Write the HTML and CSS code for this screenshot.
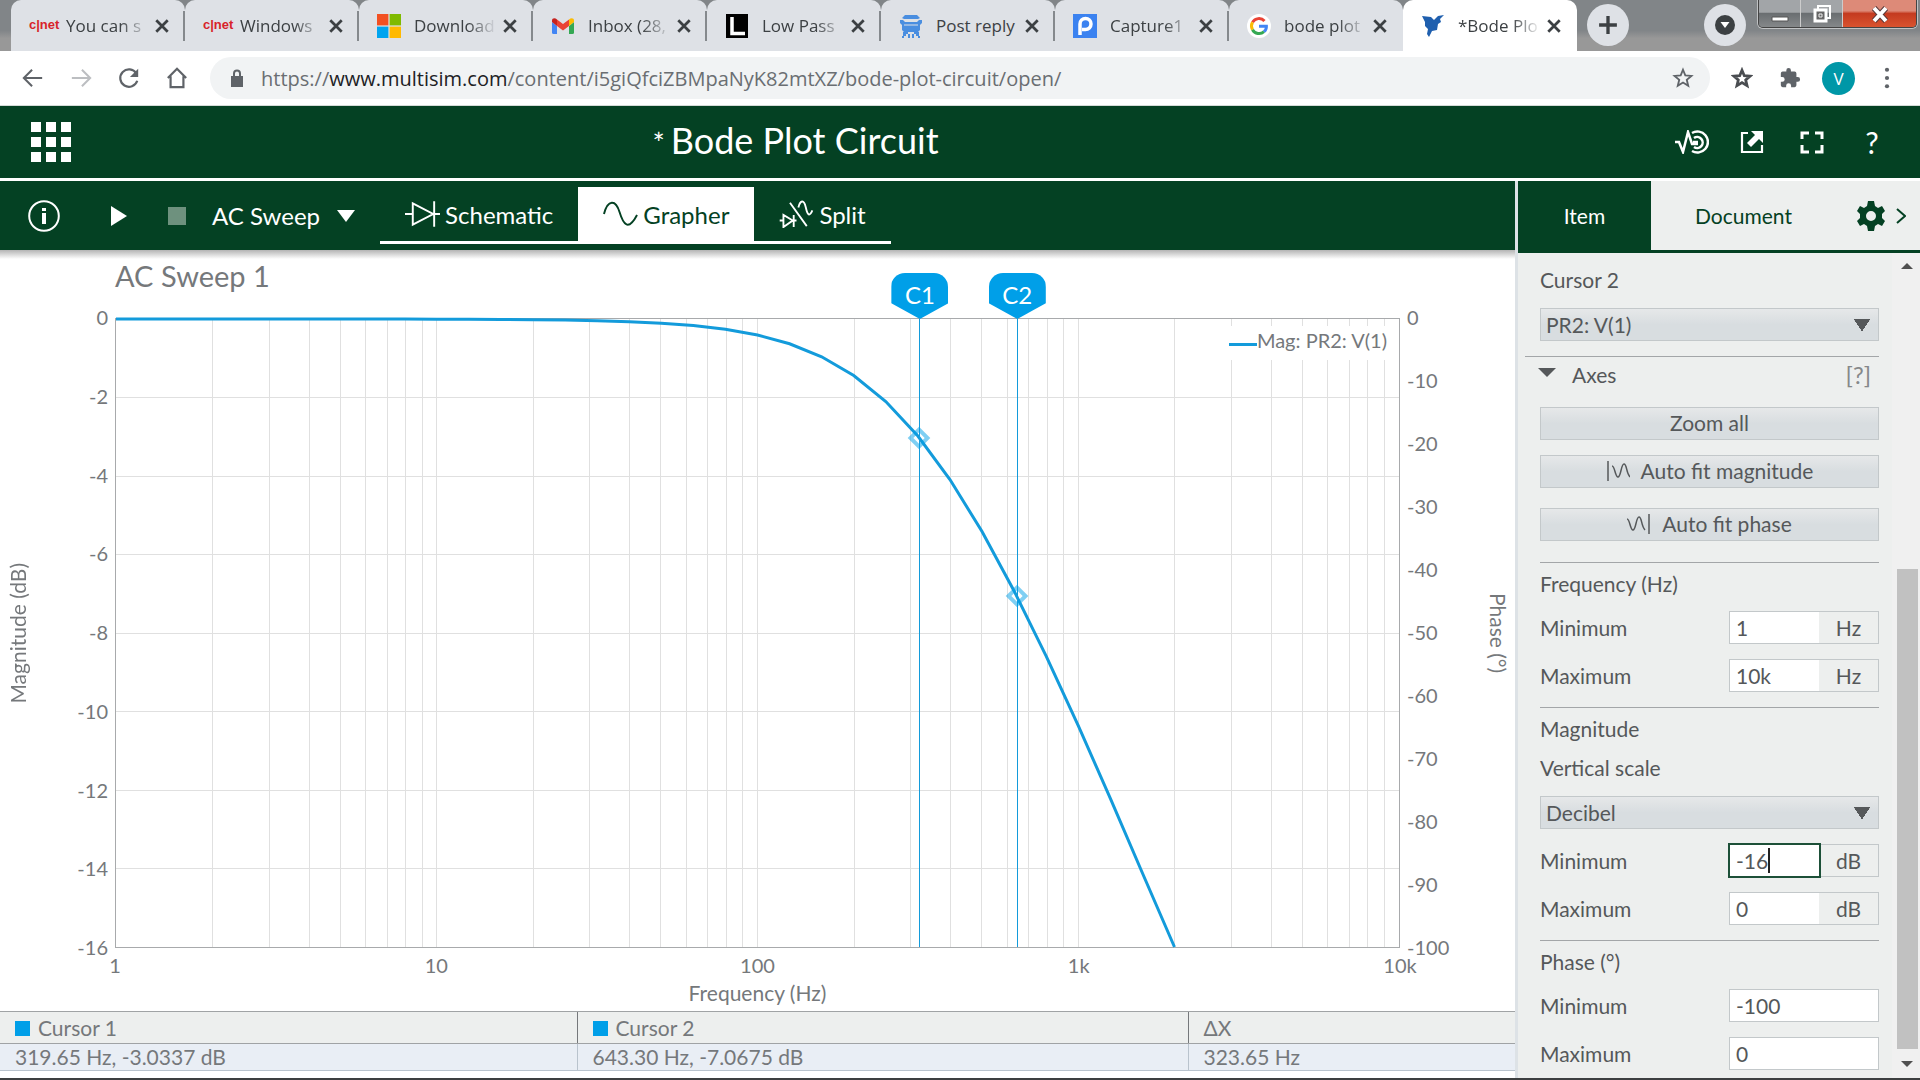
FILE: index.html
```html
<!DOCTYPE html>
<html lang="en">
<head>
  <meta charset="UTF-8">
  <meta name="viewport" content="width=device-width, initial-scale=1.0">
  <title>*Bode Plot Circuit</title>
  <link rel="stylesheet" href="styles.css">
</head>
<body>
  <!-- shared icon shapes -->
  <svg class="defs" width="0" height="0" aria-hidden="true">
    <symbol id="i-close" viewBox="0 0 14 14"><path d="M2 2l10 10M12 2L2 12" fill="none" stroke="#3c4043" stroke-width="2.4"/></symbol>
    <symbol id="i-star" viewBox="0 0 24 24"><path d="M12 3l2.500 6.200 6.700.5-5.100 4.300 1.600 6.500-5.700-3.500-5.700 3.500 1.600-6.500L2.800 9.700l6.700-.5z" fill="none" stroke="#5f6368" stroke-width="2"/></symbol>
  </svg>

  <div class="tabstrip">
    <div class="tab">
      <span class="cnet">c|net</span>
      <span class="tab-title">You can s</span>
      <button class="close" aria-label="Close tab"><svg><use href="#i-close"/></svg></button>
    </div>
    <div class="tab">
      <span class="cnet">c|net</span>
      <span class="tab-title">Windows</span>
      <button class="close" aria-label="Close tab"><svg><use href="#i-close"/></svg></button>
    </div>
    <div class="tab">
      <svg class="favicon" viewBox="0 0 24 24"><path fill="#f25022" d="M0 0h11.400v11.400H0z"/><path fill="#7fba00" d="M12.600 0H24v11.400H12.600z"/><path fill="#00a4ef" d="M0 12.600h11.400V24H0z"/><path fill="#ffb900" d="M12.600 12.600H24V24H12.600z"/></svg>
      <span class="tab-title">Download</span>
      <button class="close" aria-label="Close tab"><svg><use href="#i-close"/></svg></button>
    </div>
    <div class="tab">
      <svg class="favicon" viewBox="0 0 24 24"><path fill="#4285f4" d="M1 8l5 4v8H2.500A1.500 1.500 0 0 1 1 18.500z"/><path fill="#34a853" d="M23 8l-5 4v8h3.500a1.500 1.500 0 0 0 1.500-1.500z"/><path fill="#ea4335" d="M6 5.500l6 4.500 6-4.500V12l-6 4.500L6 12z"/><path fill="#c5221f" d="M1 8V6.500C1 4 4 3.600 6 5.500V12z"/><path fill="#fbbc04" d="M23 8V6.500C23 4 20 3.600 18 5.500V12z"/></svg>
      <span class="tab-title">Inbox (28,</span>
      <button class="close" aria-label="Close tab"><svg><use href="#i-close"/></svg></button>
    </div>
    <div class="tab">
      <svg class="favicon" viewBox="0 0 24 24"><path fill="#000" d="M1 0h22v24H1z"/><path fill="none" stroke="#fff" stroke-width="3.500" d="M7 3v16.500h13"/></svg>
      <span class="tab-title">Low Pass</span>
      <button class="close" aria-label="Close tab"><svg><use href="#i-close"/></svg></button>
    </div>
    <div class="tab">
      <svg class="favicon" viewBox="0 0 24 24" fill="#4a8ee0"><path d="M6 1h12l3 3-2 1H5L3 4zM1 6h3l2 2h12l2-2h3v3l-2 2v5l-2 2H5l-2-2v-5L1 9z"/><path d="M4 18h5v2H7v2H5v2H3v-2h1zM15 18h5v4h1v2h-2v-2h-2v-2h-2zM9 20h2v4H9zM13 20h2v4h-2z"/><path d="M5 11h14" stroke="#dee1e6"/></svg>
      <span class="tab-title full">Post reply</span>
      <button class="close" aria-label="Close tab"><svg><use href="#i-close"/></svg></button>
    </div>
    <div class="tab">
      <svg class="favicon" viewBox="0 0 24 24"><path fill="#3b82f0" d="M0 0h24v24H0z"/><path fill="none" stroke="#fff" stroke-width="3.500" d="M7 21V10a5.500 5.500 0 1 1 5.500 5.500H9"/></svg>
      <span class="tab-title">Capture1</span>
      <button class="close" aria-label="Close tab"><svg><use href="#i-close"/></svg></button>
    </div>
    <div class="tab">
      <svg class="favicon" viewBox="0 0 24 24"><circle cx="12" cy="12" r="12" fill="#fff"/><g fill="none" stroke-width="3"><path stroke="#ea4335" d="M17.500 7A7.500 7.500 0 0 0 5.500 8.300"/><path stroke="#fbbc05" d="M5.500 8.300a7.500 7.500 0 0 0 0 7.400"/><path stroke="#34a853" d="M5.500 15.700a7.500 7.500 0 0 0 11.500 2"/><path stroke="#4285f4" d="M17 17.700c2-1.800 2.500-3.700 2.400-5.400H12"/></g></svg>
      <span class="tab-title">bode plot</span>
      <button class="close" aria-label="Close tab"><svg><use href="#i-close"/></svg></button>
    </div>
    <div class="tab active">
      <svg class="favicon" viewBox="0 0 24 24"><path fill="#1f5fae" d="M1 2l9 1 3 3 4-4 6-1-4 4 1 3-3 2-1 6-5 1-3 6-2-3 1-5-3-3V8z"/></svg>
      <span class="tab-title">*Bode Plo</span>
      <button class="close" aria-label="Close tab"><svg><use href="#i-close"/></svg></button>
    </div>
    <button class="round new-tab" aria-label="New tab"><svg viewBox="0 0 18 18"><path d="M9 1v16M1 9h16" stroke="#3c4043" stroke-width="3"/></svg></button>
    <button class="round tab-search" aria-label="Search tabs"><svg viewBox="0 0 20 20"><circle cx="10" cy="10" r="10" fill="#3c4043"/><path d="M5.500 7h9L10 13z" fill="#fff"/></svg></button>
    <div class="window-controls">
      <button aria-label="Minimize"><svg viewBox="0 0 20 20"><path d="M2 13h16v4H2z" fill="#fff" stroke="#555"/></svg></button>
      <button aria-label="Restore"><svg viewBox="0 0 20 20"><path d="M6 2h12v12H6z" fill="none" stroke="#fff" stroke-width="2"/><path d="M3 6h11v11H3z" fill="#666" stroke="#fff" stroke-width="3"/><path d="M7 10h3v3H7z" fill="none" stroke="#eee"/></svg></button>
      <button class="win-close" aria-label="Close"><svg viewBox="0 0 20 20"><path d="M4 4l12 13M16 4L4 17" stroke="#5a3a3a" stroke-width="6"/><path d="M4 4l12 13M16 4L4 17" stroke="#fff" stroke-width="4"/></svg></button>
    </div>
  </div>

  <div class="browser-bar">
    <button aria-label="Back"><svg viewBox="0 0 24 24"><path d="M22 12H3M11 3l-9 9 9 9" fill="none" stroke="#5f6368" stroke-width="2.200"/></svg></button>
    <button aria-label="Forward"><svg viewBox="0 0 24 24"><path d="M2 12h19M13 3l9 9-9 9" fill="none" stroke="#bcbec1" stroke-width="2.200"/></svg></button>
    <button aria-label="Reload"><svg viewBox="0 0 24 24"><path d="M20 7a9.500 9.500 0 1 0 1 8" fill="none" stroke="#5f6368" stroke-width="2.400"/><path d="M22 2v9h-9z" fill="#5f6368"/></svg></button>
    <button aria-label="Home"><svg viewBox="0 0 24 24"><path d="M2 12L12 2l10 10M5 10v12h14V10" fill="none" stroke="#5f6368" stroke-width="2.400"/></svg></button>
    <div class="address">
      <svg class="lock" viewBox="0 0 14 18"><path d="M1 7h12v11H1z" fill="#5f6368"/><path d="M4 8V4.500a3 3 0 0 1 6 0V8" fill="none" stroke="#5f6368" stroke-width="2"/></svg>
      <span class="url">https://<b>www.multisim.com</b>/content/i5giQfciZBMpaNyK82mtXZ/bode-plot-circuit/open/</span>
      <button aria-label="Bookmark"><svg><use href="#i-star"/></svg></button>
    </div>
    <button aria-label="Bookmarks"><svg viewBox="0 0 24 24"><path d="M12 3.500l2.500 6 6.300.5-4.800 4.100 1.500 6.300-5.500-3.400-5.500 3.400L8 14.100 3.200 10l6.300-.5z" fill="none" stroke="#4a4d51" stroke-width="3"/></svg></button>
    <button aria-label="Extensions"><svg viewBox="0 0 24 24"><path d="M20.500 11H19V7a2 2 0 0 0-2-2h-4V3.500a2.500 2.500 0 0 0-5 0V5H4a2 2 0 0 0-2 2v3.800h1.500a2.700 2.700 0 0 1 0 5.400H2V20a2 2 0 0 0 2 2h3.800v-1.500a2.700 2.700 0 0 1 5.400 0V22H17a2 2 0 0 0 2-2v-4h1.500a2.500 2.500 0 0 0 0-5z" fill="#5f6368"/></svg></button>
    <button class="avatar" aria-label="Profile">V</button>
    <button aria-label="Menu"><svg viewBox="0 0 24 24" fill="#5f6368"><circle cx="12" cy="3" r="2.300"/><circle cx="12" cy="12" r="2.300"/><circle cx="12" cy="21" r="2.300"/></svg></button>
  </div>

  <header class="app-header">
    <button class="apps" aria-label="Menu"><svg viewBox="0 0 40 40" fill="#fff"><path d="M0 0h10v10H0zM15 0h10v10H15zM30 0h10v10H30zM0 15h10v10H0zM15 15h10v10H15zM30 15h10v10H30zM0 30h10v10H0zM15 30h10v10H15zM30 30h10v10H30z"/></svg></button>
    <h1><span class="dirty">*</span>Bode Plot Circuit</h1>
    <div class="header-actions">
      <button aria-label="Interactive"><svg class="wide" viewBox="0 0 34 24" fill="none" stroke="#fff" stroke-width="2.500"><path d="M0 12h4l4 10 5-20 4 12h6"/><path d="M17 3a10.500 10.500 0 1 1 0 18"/><path d="M19 8a5.500 5.500 0 1 1 0 9"/><path d="M18 12h5"/></svg></button>
      <button aria-label="Share"><svg viewBox="0 0 24 24"><path d="M8 3H2v19h20v-7" fill="none" stroke="#fff" stroke-width="2.200"/><path d="M11 1h12v12l-4-4-8 8-4-4 8-8z" fill="#fff"/></svg></button>
      <button aria-label="Full screen"><svg viewBox="0 0 24 24"><path d="M2 9V3h7M15 3h7v6M22 15v7h-7M9 22H2v-7" fill="none" stroke="#fff" stroke-width="3"/></svg></button>
      <button class="help" aria-label="Help">?</button>
    </div>
  </header>

  <main class="workspace">
    <section class="left">
      <nav class="toolbar">
        <button class="info" aria-label="Information"><svg viewBox="0 0 32 32"><circle cx="16" cy="16" r="14.800" fill="none" stroke="#fff" stroke-width="2"/><path d="M14 8h4v3h-4zM14 13h4v11h-4z" fill="#fff"/></svg></button>
        <button class="play" aria-label="Run"><svg viewBox="0 0 16 20"><path d="M0 0l16 10L0 20z" fill="#fff"/></svg></button>
        <button class="stop" aria-label="Stop"></button>
        <button class="analysis">AC Sweep <svg viewBox="0 0 18 12"><path d="M0 0h18L9 12z" fill="#fff"/></svg></button>
        <div class="views">
          <button><svg viewBox="0 0 36 28" fill="none" stroke="#fff" stroke-width="2"><path d="M0 14h8M8 3v22l21-11zM30 1v26M30 14h6"/></svg>Schematic</button>
          <button class="selected"><svg viewBox="0 0 36 28" fill="none" stroke="#044123" stroke-width="2"><path d="M1 14C5-1 13-1 17 12s9 20 18 3"/></svg>Grapher</button>
          <button><svg viewBox="0 0 36 30" fill="none" stroke="#fff" stroke-width="2"><path d="M0 22h4M4 16v13l10-7zM15 16v13M15 22h3M11 3l18 25M20 8c2-8 6-9 8 0s4 10 7 3"/></svg>Split</button>
        </div>
      </nav>

      <div class="grapher">
        <h2>AC Sweep 1</h2>
        <div class="chart">
          <div class="axis-title mag"><span>Magnitude (dB)</span></div>
          <div class="ticks mag-ticks" id="magTicks"></div>
          <div class="plot">
            <svg class="grid" id="grid" aria-hidden="true"></svg>
            <div class="legend"><i></i>Mag: PR2: V(1)</div>
            <svg class="curve" id="curve" viewBox="0 0 4 16" preserveAspectRatio="none" aria-hidden="true"></svg>
            <div class="cursors" id="cursors"></div>
          </div>
          <div class="ticks phase-ticks" id="phaseTicks"></div>
          <div class="axis-title phase"><span>Phase (°)</span></div>
          <div class="freq-ticks"><span>1</span><span>10</span><span>100</span><span>1k</span><span>10k</span></div>
          <div class="freq-title">Frequency (Hz)</div>
        </div>
        <table class="readout">
          <thead>
            <tr><th><i></i>Cursor 1</th><th><i></i>Cursor 2</th><th>ΔX</th></tr>
          </thead>
          <tbody>
            <tr><td>319.65 Hz, -3.0337 dB</td><td>643.30 Hz, -7.0675 dB</td><td>323.65 Hz</td></tr>
          </tbody>
        </table>
      </div>
    </section>

    <aside class="panel">
      <div class="panel-tabs">
        <button class="selected">Item</button>
        <button>Document</button>
        <button class="gear" aria-label="Settings"><svg viewBox="0 0 28 30"><path d="M11 0h6l1 5 3 2 4-2 3 5-3 3v4l3 3-3 5-4-2-3 2-1 5h-6l-1-5-3-2-4 2-3-5 3-3v-4l-3-3 3-5 4 2 3-2zM14 10a5 5 0 1 0 0 10 5 5 0 0 0 0-10z" fill="#044123" fill-rule="evenodd"/></svg></button>
        <button class="collapse" aria-label="Collapse panel"><svg viewBox="0 0 10 16"><path d="M1 1l8 7-8 7" fill="none" stroke="#044123" stroke-width="2"/></svg></button>
      </div>
      <div class="panel-body">
        <form class="fields">
          <label class="caption" for="cursor2">Cursor 2</label>
          <select id="cursor2"><option>PR2: V(1)</option></select>

          <div class="section-head">
            <svg viewBox="0 0 18 9"><path d="M0 0h18L9 9z" fill="#55585a"/></svg>
            <h3>Axes</h3>
            <a href="#axes-help">[?]</a>
          </div>
          <button type="button" class="btn">Zoom all</button>
          <button type="button" class="btn"><svg viewBox="0 0 24 20" fill="none" stroke="#55585a" stroke-width="1.500"><path d="M2 0v20M6 5c3 0 3 11 6 11s3-13 6-13 2 9 6 13"/></svg>Auto fit magnitude</button>
          <button type="button" class="btn last"><svg viewBox="0 0 24 20" fill="none" stroke="#55585a" stroke-width="1.500"><path d="M22 0v20M0 5c3 0 3 11 6 11s3-13 6-13 2 9 6 13"/></svg>Auto fit phase</button>

          <fieldset>
            <h4>Frequency (Hz)</h4>
            <div class="row"><label for="fmin">Minimum</label><div class="value"><input id="fmin" value="1"><span>Hz</span></div></div>
            <div class="row"><label for="fmax">Maximum</label><div class="value"><input id="fmax" value="10k"><span>Hz</span></div></div>
          </fieldset>
          <fieldset>
            <h4>Magnitude</h4>
            <label class="caption" for="scale">Vertical scale</label>
            <select id="scale"><option>Decibel</option></select>
            <div class="row"><label for="mmin">Minimum</label><div class="value editing"><input id="mmin" value="-16"><i class="caret"></i><span>dB</span></div></div>
            <div class="row"><label for="mmax">Maximum</label><div class="value"><input id="mmax" value="0"><span>dB</span></div></div>
          </fieldset>
          <fieldset>
            <h4>Phase (°)</h4>
            <div class="row"><label for="pmin">Minimum</label><div class="value"><input id="pmin" value="-100"></div></div>
            <div class="row"><label for="pmax">Maximum</label><div class="value"><input id="pmax" value="0"></div></div>
          </fieldset>
        </form>
        <div class="scrollbar">
          <svg viewBox="0 0 12 6"><path d="M0 6l6-6 6 6z" fill="#505050"/></svg>
          <div class="thumb"></div>
          <svg viewBox="0 0 12 6"><path d="M0 0h12L6 6z" fill="#505050"/></svg>
        </div>
      </div>
    </aside>
  </main>
  <script src="script.js"></script>
</body>
</html>
```
FILE: styles.css
```css
* {
    box-sizing: border-box;
}
body {
    display: flex;
    flex-direction: column;
    min-height: 100vh;
    margin: 0;
    font-family: Lato, sans-serif;
    font-size: 21px;
    color: #55585a;
    background: #fff;
    border-bottom: 2px solid #3d3f40;
}
button {
    display: flex;
    align-items: center;
    justify-content: center;
    padding: 0;
    border: 0;
    background: none;
    color: inherit;
    font: inherit;
    cursor: pointer;
}
svg {
    display: block;
    flex: none;
}
.defs {
    position: absolute;
}

/* browser window */
.tabstrip {
    display: flex;
    height: 51px;
    padding-left: 11px;
    background: linear-gradient(#818588 60%, #989898 75%);
    font-family: "Open Sans", sans-serif;
    font-size: 17px;
    color: #3c4043;
}
.tab {
    display: flex;
    align-items: center;
    flex: 0 1 174px;
    min-width: 0;
    padding: 0 15px 0 18px;
    background: linear-gradient(#85898d, #85898d) right center / 2px 30px no-repeat #dee1e6;
    border-radius: 10px 10px 0 0;
}
.tab:nth-child(8) {
    background: #dee1e6;
}
.tab.active {
    background: #fff;
}
.favicon, .cnet {
    flex: none;
    width: 24px;
    height: 24px;
}
.cnet {
    font: bold 13px/22px "Liberation Sans Narrow", "Liberation Sans", sans-serif;
    color: #d8232a;
}
.tab-title {
    flex: 1;
    margin-left: 13px;
    overflow: hidden;
    white-space: nowrap;
    -webkit-mask-image: linear-gradient(to right, #000 65%, transparent);
    mask-image: linear-gradient(to right, #000 65%, transparent);
}
.tab-title.full {
    -webkit-mask-image: none;
    mask-image: none;
}
.close {
    margin-left: 5px;
}
.close svg {
    width: 16px;
    height: 16px;
}
.round {
    flex: none;
    width: 42px;
    height: 42px;
    margin-top: 4px;
    border-radius: 50%;
    background: #dee1e6;
}
.round svg {
    width: 20px;
    height: 20px;
}
.new-tab {
    margin-left: 10px;
}
.tab-search {
    margin-left: auto;
}
.window-controls {
    display: flex;
    height: 28px;
    margin: 0 3px 0 12px;
    border: 1px solid #444;
    border-top: 0;
    border-radius: 0 0 5px 5px;
    box-shadow: 0 0 0 1px #c0c2c4;
    overflow: hidden;
}
.window-controls button {
    width: 42px;
    border-right: 1px solid #ccc;
    background: linear-gradient(#a2a5a8 45%, #6a6e71 50%, #85888a);
}
.window-controls .win-close {
    width: 73px;
    border: 0;
    background: linear-gradient(#dd8a78 40%, #c43b20 50%, #d9532f);
}
.window-controls svg {
    width: 20px;
    height: 20px;
}
.browser-bar {
    display: flex;
    align-items: center;
    height: 55px;
    padding: 0 9px;
    border-bottom: 1px solid #d5dbd8;
    font-family: "Open Sans", sans-serif;
}
.browser-bar button {
    width: 48px;
    height: 48px;
}
.browser-bar svg {
    width: 22px;
    height: 22px;
}
.address {
    display: flex;
    align-items: center;
    flex: 1;
    height: 42px;
    margin: 0 8px 0 9px;
    padding: 0 3px 0 20px;
    border-radius: 21px;
    background: #f1f3f4;
}
.browser-bar .lock {
    width: 14px;
    height: 18px;
}
.url {
    flex: 1;
    margin-left: 17px;
    font-size: 20px;
    color: #6a6e72;
}
.url b {
    font-weight: normal;
    color: #202124;
}
.browser-bar .avatar {
    width: 33px;
    height: 33px;
    margin: 0 8px;
    border-radius: 50%;
    background: #0097a7;
    color: #fff;
    font-size: 17px;
}

/* application header */
.app-header {
    display: flex;
    align-items: center;
    height: 72px;
    background: #044123;
    color: #fff;
}
.apps {
    margin-left: 31px;
}
.apps svg {
    width: 40px;
    height: 40px;
}
h1 {
    flex: 1;
    margin: 0;
    padding-bottom: 4px;
    font-size: 36px;
    font-weight: normal;
    text-align: center;
}
.dirty {
    margin-right: 6px;
    font-size: 29px;
}
.header-actions {
    display: flex;
    justify-content: flex-end;
    width: 400px;
    padding-right: 18px;
}
.header-actions button {
    width: 60px;
    height: 48px;
}
.header-actions svg {
    width: 24px;
    height: 24px;
}
.header-actions .wide {
    width: 34px;
}
.header-actions .help {
    font-size: 30px;
}

/* workspace */
.workspace {
    display: grid;
    grid-template-columns: minmax(0, 1fr) 405px;
    flex: 1;
    margin-top: 3px;
}
.left {
    display: flex;
    flex-direction: column;
}
.toolbar {
    display: flex;
    align-items: center;
    height: 69px;
    background: #044123;
    color: #fff;
    font-size: 24px;
}
.info {
    margin-left: 28px;
}
.info svg {
    width: 32px;
    height: 32px;
}
.play {
    margin-left: 51px;
}
.play svg {
    width: 16px;
    height: 20px;
}
.stop {
    width: 18px;
    height: 18px;
    margin-left: 41px;
    background: #6e917e;
}
.analysis {
    gap: 17px;
    margin-left: 26px;
}
.analysis svg {
    width: 18px;
    height: 12px;
}
.views {
    display: flex;
    height: 57px;
    margin-left: 25px;
    border-bottom: 3px solid #fff;
}
.views button {
    gap: 5px;
    padding: 0 25px;
}
.views svg {
    width: 35px;
    height: 28px;
}
.views .selected {
    background: #fff;
    color: #044123;
}

/* grapher */
.grapher {
    display: flex;
    flex-direction: column;
    flex: 1;
    padding-bottom: 7px;
    background: linear-gradient(#b4b4b4, #fff 9px);
    color: #75787b;
}
h2 {
    margin: 8px 0 0 115px;
    font-size: 29px;
    font-weight: normal;
    line-height: 36px;
}
.chart {
    display: grid;
    grid-template-columns: 34px 81px minmax(0, 1fr) 78px 37px;
    grid-template-rows: minmax(300px, 1fr) 36px 27px;
    flex: 1;
    padding-top: 24px;
}
.axis-title {
    display: flex;
    align-items: center;
    justify-content: center;
    writing-mode: vertical-rl;
}
.mag span {
    transform: rotate(180deg);
}
.phase {
    padding-left: 3px;
}
.ticks {
    display: flex;
    flex-direction: column;
    justify-content: space-between;
    margin: -11px 0 -9px;
    font-size: 20px;
    line-height: 20px;
}
.mag-ticks {
    padding-right: 7px;
    text-align: right;
}
.phase-ticks {
    padding-left: 7px;
}
.plot {
    position: relative;
    border: 1px solid #a8aaac;
}
.plot > svg {
    position: absolute;
    inset: 0;
    width: 100%;
    height: 100%;
}
.grid line {
    stroke: #e0e0e0;
    shape-rendering: crispEdges;
}
.plot .curve {
    overflow: visible;
}
.curve polyline {
    fill: none;
    stroke: #139bdb;
    stroke-width: 3;
    vector-effect: non-scaling-stroke;
}
.legend {
    position: absolute;
    top: 7px;
    right: 1px;
    display: flex;
    align-items: center;
    padding: 0 11px 6px;
    background: #fff;
    font-size: 20px;
    line-height: 28px;
}
.legend i {
    width: 28px;
    height: 3px;
    margin-top: 8px;
    background: #139bdb;
}
.cursor {
    position: absolute;
    top: 0;
    bottom: 0;
    width: 1px;
    background: #139bdb;
}
.flag {
    position: absolute;
    bottom: 100%;
    left: -28px;
    width: 57px;
    height: 46px;
    border-radius: 14px 14px 0 0;
    background: #009fe8;
    clip-path: polygon(0 0, 100% 0, 100% 66%, 50% 100%, 0 66%);
    color: #fff;
    font-size: 24px;
    line-height: 44px;
    text-align: center;
}
.marker {
    position: absolute;
    left: -8px;
    width: 16px;
    height: 16px;
    margin-top: -8px;
    border: 4px solid rgba(0, 159, 232, 0.5);
    transform: rotate(45deg);
}
.freq-ticks {
    display: flex;
    grid-column: 3;
    justify-content: space-between;
    margin: 0 -20px;
    font-size: 20px;
    line-height: 34px;
}
.freq-ticks span {
    width: 40px;
    text-align: center;
}
.freq-title {
    grid-column: 3;
    line-height: 18px;
    text-align: center;
}
.readout {
    width: 100%;
    border-collapse: collapse;
    table-layout: fixed;
}
.readout th, .readout td {
    height: 27px;
    padding: 0 15px;
    border-left: 1px solid #b9c3cd;
    border-bottom: 1px solid #b9c3cd;
    background: #e9eef5;
    font-weight: normal;
    line-height: 26px;
    text-align: left;
}
.readout th {
    width: 611px;
    height: 32px;
    border-color: #75787b #75787b #a0a3a5;
    border-top: 1px solid #a0a3a5;
    background: #edefee;
}
.readout th:first-child {
    width: 577px;
}
.readout th:last-child {
    width: auto;
}
.readout th:first-child, .readout td:first-child {
    border-left: 0;
}
.readout i {
    display: inline-block;
    width: 15px;
    height: 15px;
    margin-right: 8px;
    background: #009fe8;
}

/* properties panel */
.panel {
    display: flex;
    flex-direction: column;
    border-left: 3px solid #dde2e6;
    background: #edefee;
}
.panel-tabs {
    display: flex;
    height: 72px;
    border-bottom: 3px solid #044123;
    color: #044123;
}
.panel-tabs button {
    flex: 0 0 185px;
}
.panel-tabs .selected {
    flex-basis: 133px;
    background: #044123;
    color: #fff;
}
.panel-tabs .gear {
    flex: 0 0 28px;
    margin-left: 21px;
}
.gear svg {
    width: 28px;
    height: 30px;
}
.panel-tabs .collapse {
    flex: 0 0 10px;
    margin-left: 11px;
}
.collapse svg {
    width: 10px;
    height: 16px;
}
.panel-body {
    display: flex;
    flex: 1;
}
.fields {
    flex: 1;
    padding: 15px 13px 8px 22px;
}
.caption {
    display: block;
    margin-bottom: 16px;
    line-height: 24px;
}
select, .btn {
    width: 100%;
    height: 33px;
    margin-bottom: 15px;
    border: 1px solid #c3c8ca;
    border-radius: 0;
    background: linear-gradient(#e6e8e9, #d8dde0 50%);
    color: #55585a;
    font: inherit;
}
.btn {
    padding-bottom: 2px;
}
select {
    display: block;
    padding: 0 5px;
    appearance: none;
    background: linear-gradient(56deg, transparent 50%, #55585a 51%) right 16px center / 9px 12px no-repeat, linear-gradient(-56deg, transparent 50%, #55585a 51%) right 7px center / 9px 12px no-repeat, linear-gradient(#e6e8e9, #d8dde0 50%);
}
.section-head {
    display: flex;
    margin: 0 0 14px -15px;
    padding-left: 13px;
    border-top: 1px solid #a3a6a8;
    line-height: 36px;
}
.section-head svg {
    width: 18px;
    height: 9px;
    margin-top: 11px;
}
h3, h4 {
    margin: 0;
    font-size: 21px;
    font-weight: normal;
}
h3 {
    flex: 1;
    margin-left: 16px;
}
.section-head a {
    padding-right: 8px;
    color: #85888a;
    font-size: 24px;
    text-decoration: none;
}
.btn svg {
    width: 24px;
    height: 20px;
    margin-right: 11px;
}
.btn.last {
    margin: 20px 0 21px;
}
fieldset {
    margin: 0;
    padding: 0;
    border: 0;
    border-top: 1px solid #a3a6a8;
}
h4 {
    margin-bottom: 6px;
    line-height: 42px;
}
.row {
    display: flex;
    justify-content: space-between;
    height: 33px;
    margin-bottom: 15px;
    line-height: 33px;
}
fieldset:last-child .row:last-child {
    margin-bottom: 0;
}
.value {
    position: relative;
    display: flex;
    width: 150px;
    border: 1px solid #c3c8ca;
}
.value input {
    flex: 1;
    min-width: 0;
    padding: 0 6px;
    border: 0;
    background: #fff;
    color: inherit;
    font: inherit;
}
.value span {
    width: 59px;
    line-height: 31px;
    text-align: center;
}
.editing input {
    outline: 2px solid #1d5038;
}
.caret {
    position: absolute;
    top: 3px;
    left: 38px;
    width: 2px;
    height: 25px;
    background: #222;
}
.scrollbar {
    display: flex;
    flex-direction: column;
    align-items: center;
    width: 28px;
    padding: 10px 0 11px 2px;
    background: #f0f0f0;
}
.scrollbar svg {
    width: 12px;
    height: 6px;
}
.thumb {
    width: 21px;
    height: 480px;
    margin: auto 0 12px;
    background: #c1c1c1;
}
```
FILE: script.js
```js
const SVG = 'http://www.w3.org/2000/svg';
const DECADES = 4;
const MIN_DB = -16;
const CUTOFF = 318.31;

const magnitude = f => -10 * Math.log10(1 + (f / CUTOFF) ** 2);

function addLine(x1, y1, x2, y2) {
  const line = document.createElementNS(SVG, 'line');
  line.setAttribute('x1', x1 + '%');
  line.setAttribute('y1', y1 + '%');
  line.setAttribute('x2', x2 + '%');
  line.setAttribute('y2', y2 + '%');
  document.getElementById('grid').appendChild(line);
}

function addTicks(id, step, count) {
  for (let i = 0; i < count; i++) {
    const tick = document.createElement('span');
    tick.textContent = i * step || 0;
    document.getElementById(id).appendChild(tick);
  }
}

// logarithmic frequency lines
for (let d = 0; d < DECADES; d++) {
  for (let n = 2; n <= 10; n++) {
    const x = (d + Math.log10(n)) / DECADES * 100;
    if (x < 100) addLine(x, 0, x, 100);
  }
}
for (let db = -2; db > MIN_DB; db -= 2) {
  addLine(0, db / MIN_DB * 100, 100, db / MIN_DB * 100);
}
addTicks('magTicks', -2, 9);
addTicks('phaseTicks', -10, 11);

// ten sweep points per decade
const points = [];
for (let i = 0; i <= 33; i++) {
  points.push(i / 10 + ',' + Math.min(-magnitude(10 ** (i / 10)), -MIN_DB));
}
const curve = document.createElementNS(SVG, 'polyline');
curve.setAttribute('points', points.join(' '));
document.getElementById('curve').appendChild(curve);

const cursors = [
  { name: 'C1', freq: 319.65, db: -3.0337 },
  { name: 'C2', freq: 643.30, db: -7.0675 }
];
cursors.forEach(c => {
  const el = document.createElement('div');
  el.className = 'cursor';
  el.style.left = Math.log10(c.freq) / DECADES * 100 + '%';
  el.innerHTML = `<div class="flag">${c.name}</div><div class="marker" style="top: ${c.db / MIN_DB * 100}%"></div>`;
  document.getElementById('cursors').appendChild(el);
});
```
